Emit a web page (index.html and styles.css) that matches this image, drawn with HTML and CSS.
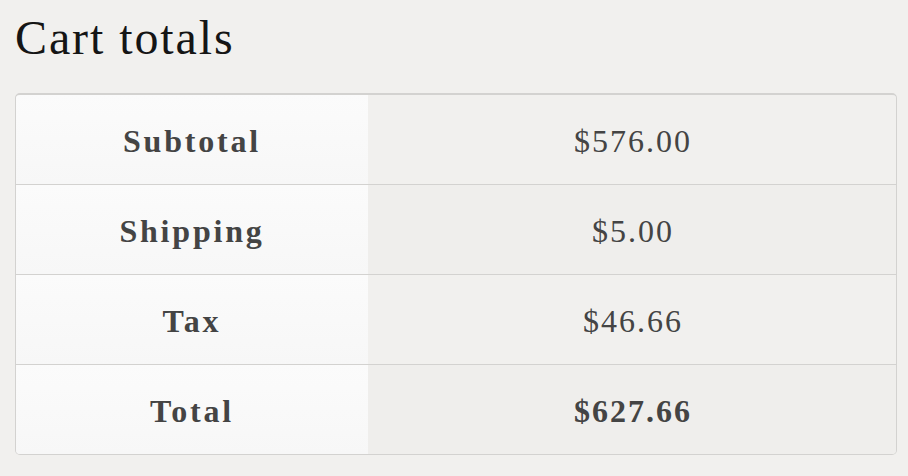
FILE: index.html
```html
<!DOCTYPE html>
<html>
<head>
<meta charset="utf-8">
<title>Cart totals</title>
<link rel="stylesheet" href="styles.css">
</head>
<body>
<div class="cart-totals">
  <h2 class="title">Cart totals</h2>
  <div class="totals">
    <div class="row">
      <div class="label">Subtotal</div>
      <div class="value">$576.00</div>
    </div>
    <div class="row">
      <div class="label">Shipping</div>
      <div class="value">$5.00</div>
    </div>
    <div class="row">
      <div class="label">Tax</div>
      <div class="value">$46.66</div>
    </div>
    <div class="row">
      <div class="label">Total</div>
      <div class="value strong">$627.66</div>
    </div>
  </div>
</div>
</body>
</html>
```

FILE: styles.css
```css
html, body {
  margin: 0;
  padding: 0;
  background: #f1f0ee;
}
body {
  font-family: "Liberation Serif", "DejaVu Serif", serif;
}
.cart-totals {
  padding: 10px 11px 0 15px;
}
.title {
  margin: 0 0 28px 0;
  font-size: 48px;
  font-weight: normal;
  line-height: 1.15;
  letter-spacing: 1.9px;
  color: #151515;
}
.totals {
  border: 1px solid #d3d2d0;
  border-top-width: 2px;
  border-radius: 5px;
  overflow: hidden;
  box-shadow: inset 0 1px 0 #dedddb;
}
.row {
  display: grid;
  grid-template-columns: 352px 1fr;
  height: 89px;
  border-top: 1px solid #d3d2d0;
}
.row:first-child {
  border-top: none;
}
.label, .value {
  display: flex;
  align-items: center;
  justify-content: center;
  padding-top: 4px;
  font-size: 32px;
  color: #444444;
}
.label {
  background: linear-gradient(#fbfbfb, #f7f7f7);
  font-weight: bold;
  letter-spacing: 2.8px;
}
.value {
  background: #f1f0ee;
  letter-spacing: 2px;
  padding-left: 2px;
}
.row:nth-child(even) .value {
  background: #efeeec;
}
.value.strong {
  font-weight: bold;
  letter-spacing: 2px;
}
```
